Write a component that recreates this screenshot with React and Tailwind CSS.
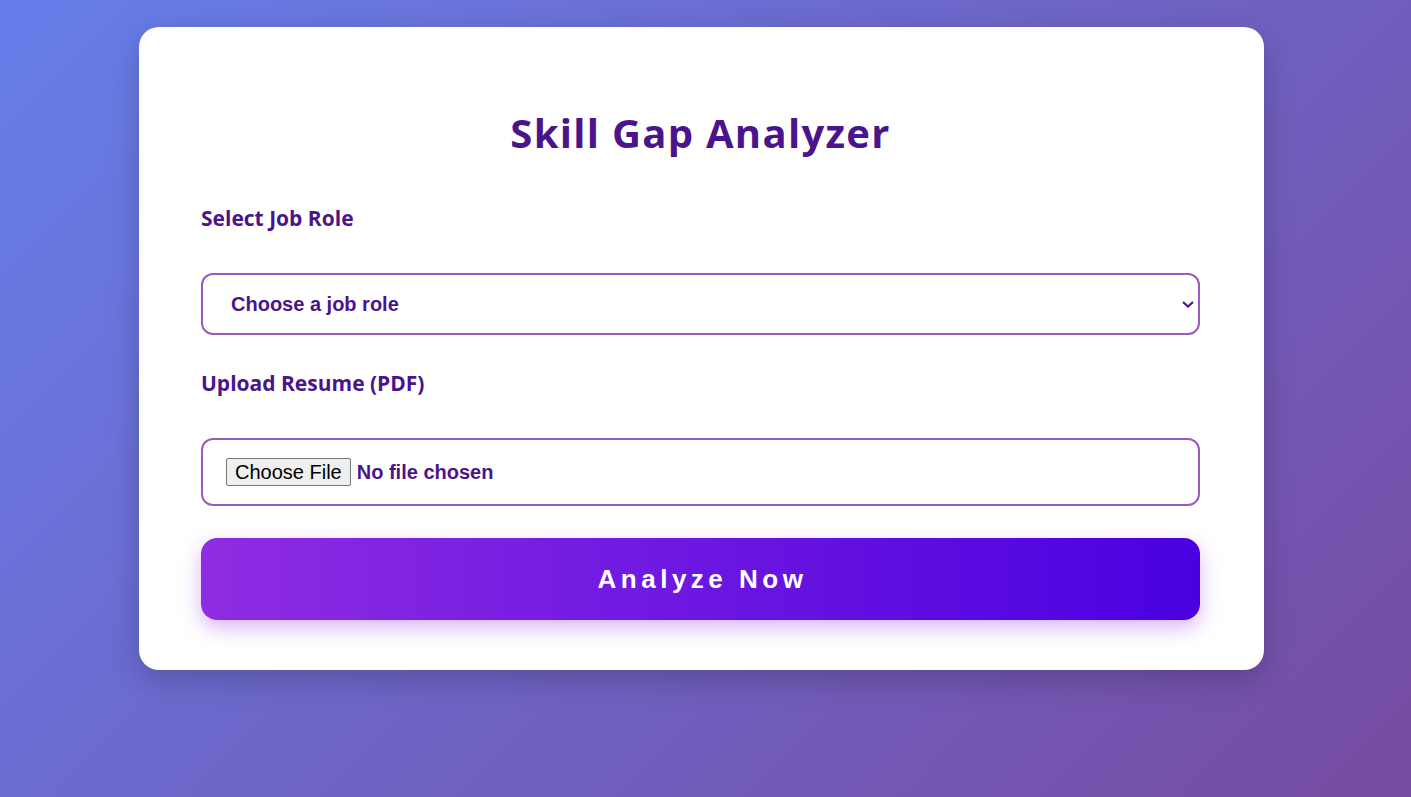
import React from "react";

export default function App() {
  return (
    <div className="min-h-[797px] w-full bg-[linear-gradient(135deg,#667eea_0%,#764ba2_100%)] pt-[27px] pb-[127px]">
      <div className="ml-[139px] w-[1125px] rounded-[20px] bg-white pl-[62px] pr-[64px] pt-[82px] pb-[50px] shadow-[0_10px_30px_rgba(0,0,0,0.2)]">
        <h1 className="text-center text-[40px] leading-[48px] font-bold tracking-[1.3px] text-[#4a148c] [font-family:'Open_Sans',sans-serif]">
          Skill Gap Analyzer
        </h1>

        <label className="mt-[49px] block text-[21px] leading-[24px] font-bold text-[#4a148c] [font-family:'Open_Sans',sans-serif]">
          Select Job Role
        </label>
        <div className="relative mt-[43px]">
          <select className="h-[62px] w-full appearance-none rounded-[12px] border-2 border-[#9c59c0] bg-white pl-[28px] text-[20px] font-bold text-[#4a148c] outline-none [font-family:'Liberation_Sans',Arial,sans-serif]">
            <option>Choose a job role</option>
          </select>
          <svg
            className="pointer-events-none absolute right-[5px] top-[27px]"
            width="14"
            height="9"
            viewBox="0 0 14 9"
          >
            <path d="M2 2 L7 6.5 L12 2" fill="none" stroke="#4a148c" strokeWidth="2.2" />
          </svg>
        </div>

        <label className="mt-[36px] block text-[21px] leading-[24px] font-bold text-[#4a148c] [font-family:'Open_Sans',sans-serif]">
          Upload Resume (PDF)
        </label>
        <div className="mt-[43px] flex h-[68px] items-center rounded-[12px] border-2 border-[#9c59c0] bg-white pl-[23px]">
          <span className="flex h-[28px] items-center rounded-[2px] border border-[#767676] bg-[#efefef] px-[8px] text-[20px] text-black [font-family:'Liberation_Sans',Arial,sans-serif]">
            Choose File
          </span>
          <span className="ml-[6px] text-[20px] font-bold text-[#4a148c] [font-family:'Liberation_Sans',Arial,sans-serif]">
            No file chosen
          </span>
        </div>

        <button className="mt-[32px] flex h-[82px] w-full items-center justify-center rounded-[16px] bg-[linear-gradient(90deg,#8e2de2,#4a00e0)] pl-[4px] text-[26px] font-bold tracking-[4.5px] text-white shadow-[0_8px_20px_rgba(142,45,226,0.35)] [font-family:'Liberation_Sans',Arial,sans-serif]">
          Analyze Now
        </button>
      </div>
    </div>
  );
}
